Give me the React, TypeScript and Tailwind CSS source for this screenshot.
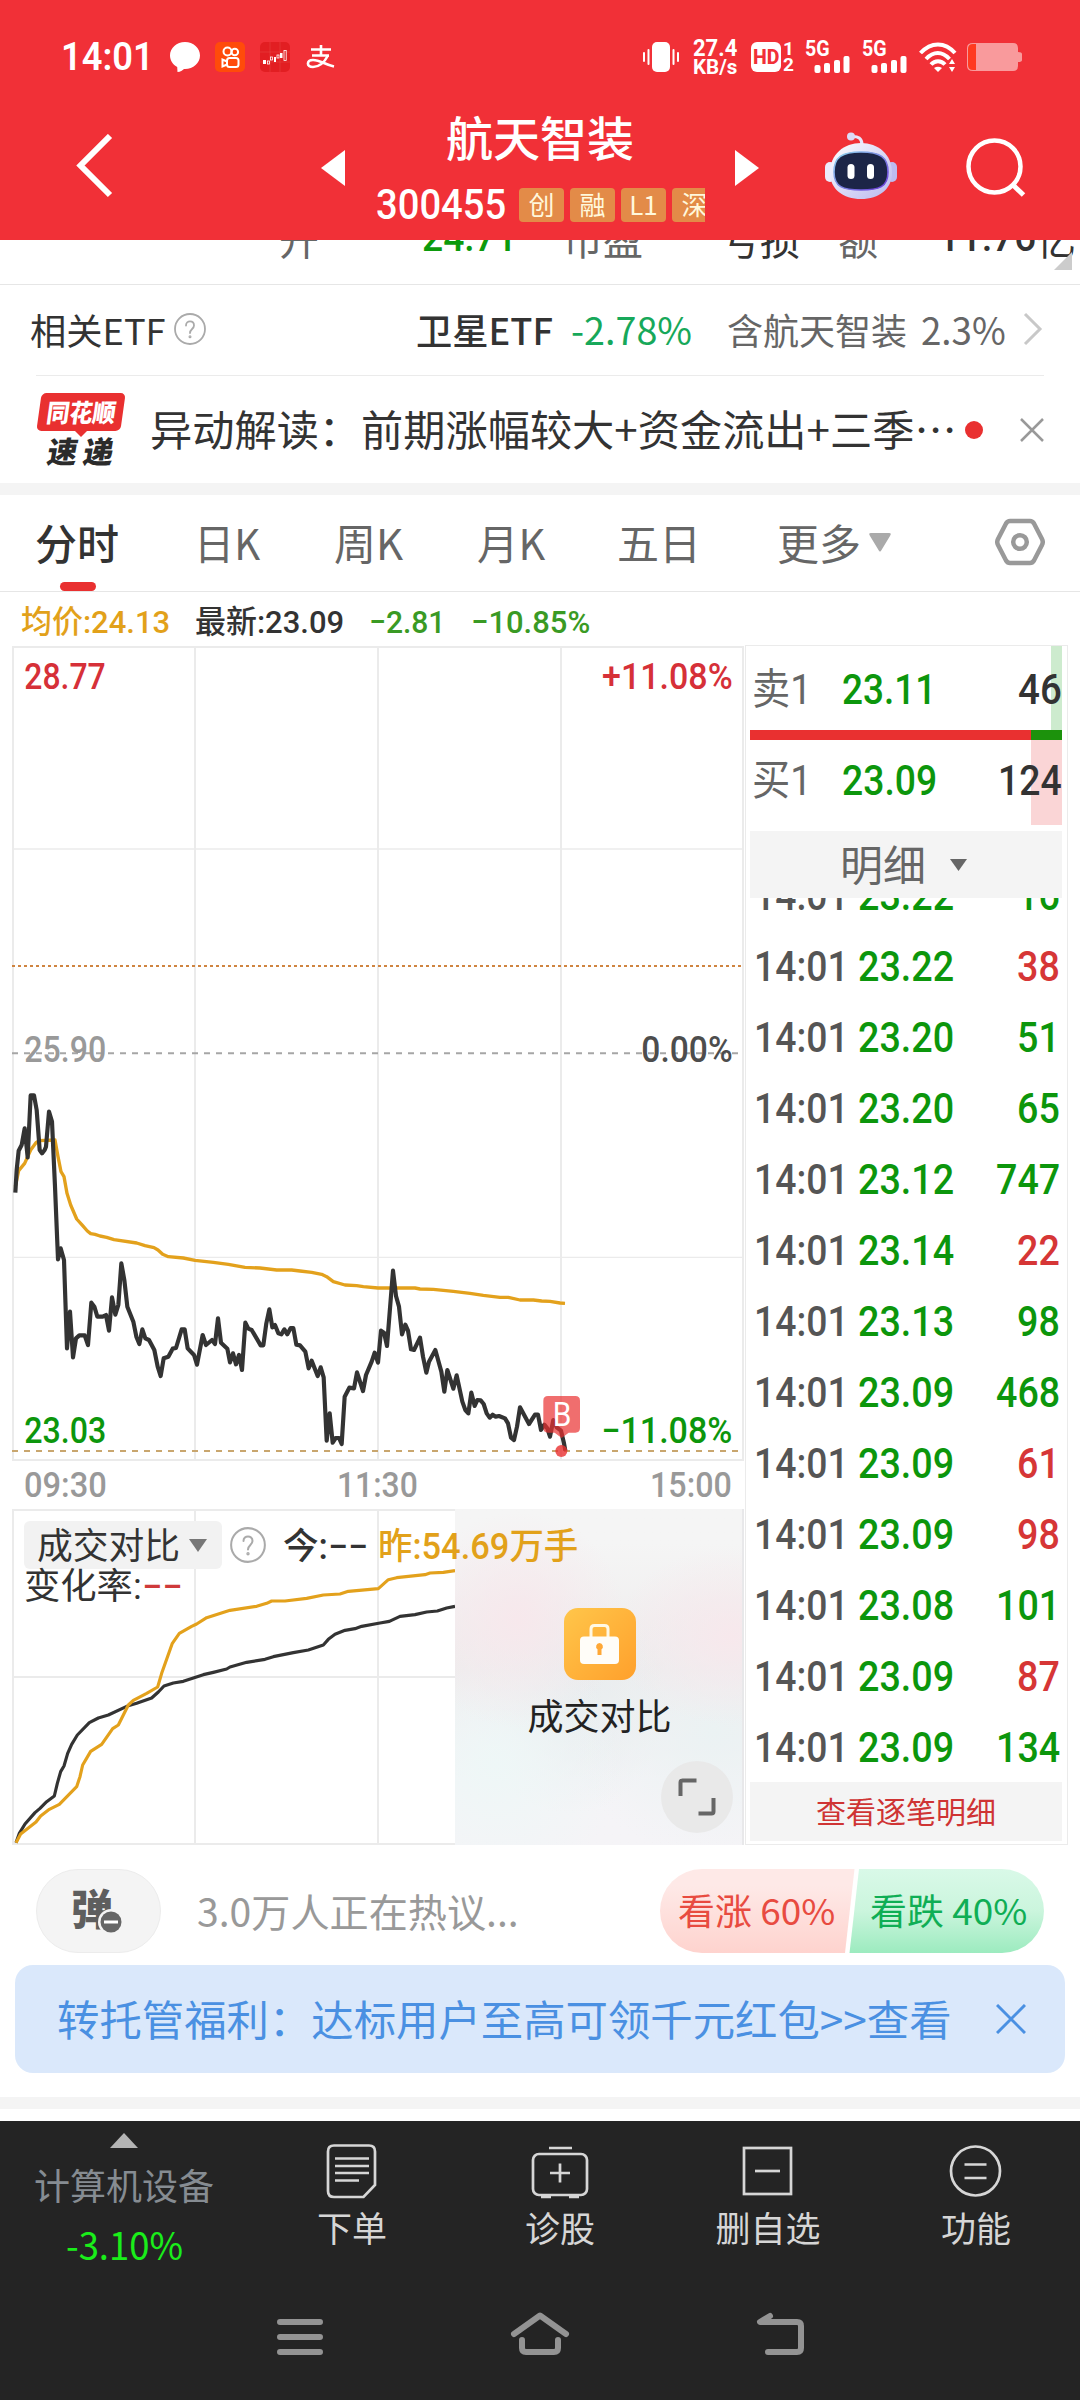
import React, { useLayoutEffect, useRef, useState } from "react";

/** Single line of text squeezed or stretched horizontally to an exact width. */
function Fit({ w, className = "", children }: { w: number; className?: string; children: React.ReactNode }) {
  const ref = useRef<HTMLSpanElement>(null);
  const [scale, setScale] = useState(1);
  useLayoutEffect(() => {
    if (ref.current) setScale(w / ref.current.offsetWidth);
  }, [w]);
  return (
    <span className={`inline-block shrink-0 whitespace-nowrap ${className}`} style={{ width: w }}>
      <span ref={ref} className="inline-block origin-left" style={{ transform: `scaleX(${scale})` }}>
        {children}
      </span>
    </span>
  );
}

function Signal() {
  return (
    <div className="relative h-[32px] w-[45px]">
      <Fit w={25} className="absolute top-0 left-0 font-['Roboto'] text-[22px] leading-[16px] font-bold">5G</Fit>
      <svg className="absolute right-0 bottom-0 h-[17px] w-[36px]" viewBox="0 0 36 17" fill="#fff">
        <rect x="0.5" y="9" width="6" height="8" rx="2" />
        <rect x="10" y="7" width="6" height="10" rx="2" />
        <rect x="20" y="4" width="6" height="13" rx="2" />
        <rect x="29.5" y="0" width="6" height="17" rx="2" />
      </svg>
    </div>
  );
}

function StatusBar() {
  return (
    <div className="flex h-[114px] items-center pl-[61px] text-white">
      <Fit w={93} className="font-['Roboto'] text-[39px] leading-[40px] font-semibold">14:01</Fit>
      <svg className="ml-[16px] h-[32px] w-[30px]" viewBox="0 0 30 32" fill="#fff">
        <path d="M15 1C6.700 1 0 7 0 14.500c0 5 3 9.300 7.200 11.500l.3 5c3 0 5-1.500 6.500-3H15c8.300 0 15-6 15-13.500S23.300 1 15 1z" />
      </svg>
      <svg className="ml-[15px] h-[30px] w-[30px]" viewBox="0 0 30 30" fill="none">
        <rect width="30" height="30" rx="5" fill="#ff4b0a" />
        <g stroke="#fff" strokeWidth="2">
          <circle cx="12.500" cy="9.500" r="4" />
          <circle cx="19.800" cy="10" r="3.300" />
          <rect x="12" y="16" width="11.500" height="9" rx="2.500" />
          <path d="M12 19.500l-4.500-2v7l4.500-2" />
        </g>
      </svg>
      <svg className="ml-[15px] h-[30px] w-[30px]" viewBox="0 0 30 30">
        <rect width="30" height="30" rx="5" fill="#e21e22" />
        <path d="M10 0v30M20 0v30M0 10h30M0 20h30" stroke="#e8403f" strokeWidth="0.6" />
        <g fill="#fff">
          <rect x="3" y="18" width="3" height="4" />
          <rect x="14" y="15" width="2" height="5" />
          <rect x="20" y="11" width="2.500" height="5" />
        </g>
        <g fill="none" stroke="#fff" strokeWidth="0.8">
          <rect x="7.500" y="19" width="2" height="3" />
          <rect x="10.500" y="15" width="2" height="3" />
          <rect x="17" y="13" width="2" height="3" />
          <rect x="24" y="8.500" width="2.200" height="10" />
        </g>
      </svg>
      <svg className="ml-[16px] h-[24px] w-[30px]" viewBox="0 0 30 24" fill="none" stroke="#fff" strokeWidth="2.600">
        <path d="M5 4.500h20M15 0v10M6 10.500h17" />
        <path d="M22 10.500C18 18 13 22 7 22c-7 0-6.500-7 0-7 7 0 12 4.500 21 6.500" />
      </svg>

      <svg className="ml-[307px] h-[32px] w-[36px]" viewBox="0 0 36 32" fill="#fff">
        <rect x="9" y="1" width="18" height="30" rx="5" />
        <path d="M5.500 9v14M1 12v8M30.500 9v14M35 12v8" stroke="#fff" strokeWidth="2" strokeLinecap="round" />
      </svg>
      <div className="ml-[14px] flex flex-col font-['Roboto'] font-bold">
        <Fit w={44} className="text-[24px] leading-[20px]">27.4</Fit>
        <Fit w={44} className="text-[21px] leading-[19px]">KB/s</Fit>
      </div>
      <div className="ml-[14px] flex h-[30px] w-[30px] items-center justify-center rounded-[6px] bg-white font-['Roboto'] text-[#f13037]">
        <Fit w={26} className="text-[21px] leading-[20px] font-extrabold">HD</Fit>
      </div>
      <div className="ml-[2px] flex w-[11px] flex-col items-center font-['Roboto'] text-[19px] leading-[16px] font-bold">
        <span>1</span>
        <span>2</span>
      </div>
      <div className="ml-[11px]"><Signal /></div>
      <div className="ml-[12px]"><Signal /></div>
      <svg className="ml-[12px] h-[32px] w-[38px]" viewBox="0 0 38 32" fill="none" stroke="#fff" strokeWidth="4">
        <path d="M1.500 12C12 0.500 26 0.500 36 12" />
        <path d="M7 18C14.500 10 23 10 30.500 18" />
        <path d="M12 23.500c4-4.500 10-4.500 14 0" />
        <path d="M15 27q4-2.500 8 0l-4 4z" fill="#fff" stroke="none" />
        <path d="M30 23l3-5 3 5zM30 26l3 5 3-5z" fill="#fff" stroke="none" />
      </svg>
      <svg className="ml-[10px] h-[28px] w-[55px]" viewBox="0 0 55 28">
        <path d="M6 0h40q5 0 5 5v4q4 0 4 2v6q0 2-4 2v4q0 5-5 5H6q-6 0-6-5V5q0-5 6-5z" fill="#f99a9c" />
        <path d="M6 1h3v26H6q-5 0-5-5V6q0-5 5-5z" fill="#ff3a20" />
      </svg>
    </div>
  );
}

function Tag({ children }: { children: React.ReactNode }) {
  return (
    <span className="flex h-[34px] w-[45px] shrink-0 items-center justify-center rounded-[4px] bg-[#e38b48] pb-[2px] text-[26px] leading-[30px] text-[#fff8dc]">
      {children}
    </span>
  );
}

function Robot() {
  return (
    <svg className="h-[68px] w-[72px]" viewBox="0 0 72 68">
      <defs>
        <linearGradient id="shell" x1="0" y1="0" x2="1" y2="1">
          <stop offset="0" stopColor="#ffffff" />
          <stop offset="1" stopColor="#b9b8ee" />
        </linearGradient>
        <linearGradient id="rim" x1="0" y1="0" x2="1" y2="1">
          <stop offset="0" stopColor="#8fd8ee" />
          <stop offset="1" stopColor="#6a35d8" />
        </linearGradient>
      </defs>
      <path d="M26 4.500q11-1 11 8" fill="none" stroke="#e8e6fb" strokeWidth="3" />
      <circle cx="26" cy="4.500" r="4" fill="#dcdaf6" />
      <rect x="0" y="30" width="10" height="20" rx="5" fill="#eceafb" />
      <rect x="62" y="30" width="10" height="20" rx="5" fill="#bdbcf0" />
      <path d="M36 11C53 11 67 22 67 41C67 57 54 67 36 67S5 57 5 41C5 22 19 11 36 11z" fill="url(#shell)" />
      <path d="M36 20c19 0 27 5 27 20s-9 18-27 18S9 55 9 40s8-20 27-20z" fill="#1c2547" stroke="url(#rim)" strokeWidth="1.600" />
      <rect x="22.500" y="32" width="7" height="15" rx="3.500" fill="#fff" />
      <rect x="42" y="32" width="7" height="15" rx="3.500" fill="#fff" />
    </svg>
  );
}

function Header() {
  return (
    <header className="h-[240px] bg-[#f13037]">
      <StatusBar />
      <div className="flex h-[126px] items-start text-white">
        <svg className="mt-[20px] ml-[76px] h-[64px] w-[37px]" viewBox="0 0 37 64" fill="none" stroke="#fff" strokeWidth="6">
          <path d="M34 2L4.500 31.500L34 61" />
        </svg>
        <svg className="mt-[36px] ml-[208px] h-[36px] w-[24px]" viewBox="0 0 24 36" fill="#fff"><path d="M24 0v36L0 18z" /></svg>
        <div className="ml-[31px] w-[330px]">
          <div className="ml-[70px] h-[68px] text-[47px] leading-[44px] font-medium">航天智装</div>
          <div className="flex w-[329px] items-center gap-[6px] overflow-hidden">
            <Fit w={130} className="mr-[7px] font-['Roboto'] text-[42px] leading-[46px] font-medium">300455</Fit>
            <Tag>创</Tag>
            <Tag>融</Tag>
            <Tag>L1</Tag>
            <Tag>深</Tag>
          </div>
        </div>
        <svg className="mt-[36px] ml-[29px] h-[36px] w-[24px]" viewBox="0 0 24 36" fill="#fff"><path d="M0 0v36L24 18z" /></svg>
        <div className="mt-[18px] ml-[66px]"><Robot /></div>
        <svg className="mt-[24px] ml-[69px] h-[62px] w-[62px]" viewBox="0 0 62 62" fill="none" stroke="#fff" strokeWidth="4.500">
          <circle cx="28.500" cy="28.500" r="26" />
          <path d="M46.500 46.500l11 10.500" strokeWidth="5" />
        </svg>
      </div>
    </header>
  );
}

/** Bottom edge of the quote table that is scrolled under the header. */
function QuoteTail() {
  return (
    <div className="relative flex h-[45px] items-end overflow-hidden border-b border-[#e6e6e6] pb-[16px] text-[40px] leading-[60px] whitespace-nowrap text-[#666]">
      <span className="ml-[279px]">开</span>
      <Fit w={95} className="ml-[103px] font-['Roboto'] font-medium text-[#0c9a0c]">24.71</Fit>
      <span className="ml-[46px]">市盈</span>
      <span className="ml-[77px] text-[#333]">亏损</span>
      <span className="ml-[38px]">额</span>
      <Fit w={98} className="ml-[60px] font-['Roboto'] font-medium text-[#333]">11.76</Fit>
      <span className="text-[#333]">亿</span>
      <svg className="absolute right-[8px] bottom-[14px] h-[18px] w-[18px]" viewBox="0 0 18 18"><path d="M18 0v18H0z" fill="#ccc" /></svg>
    </div>
  );
}

function Question({ className }: { className: string }) {
  return (
    <svg className={className} viewBox="0 0 32 32" fill="none" stroke="#aaa" strokeWidth="1.800" strokeLinecap="round">
      <circle cx="16" cy="16" r="15" />
      <path d="M12 12.500c0-5.500 8-5.500 8 0 0 3.500-4 3.500-4 7.500" />
      <circle cx="16" cy="23.800" r="0.600" />
    </svg>
  );
}

function EtfRow() {
  return (
    <div className="flex h-[90px] items-center pb-[2px] pl-[30px] text-[36px] leading-[40px] text-[#333]">
      <Fit w={136}>相关ETF</Fit>
      <Question className="ml-[8px] h-[32px] w-[32px]" />
      <Fit w={137} className="ml-[210px] font-medium">卫星ETF</Fit>
      <Fit w={121} className="ml-[18px] text-[38px] text-[#17a85a]">-2.78%</Fit>
      <span className="ml-[35px] text-[#666]">含航天智装</span>
      <Fit w={85} className="ml-[14px] text-[38px] text-[#666]">2.3%</Fit>
      <svg className="ml-[17px] h-[34px] w-[20px]" viewBox="0 0 20 34" fill="none" stroke="#c8c8c8" strokeWidth="3"><path d="M2 2l15 15L2 32" /></svg>
    </div>
  );
}

function NewsRow() {
  return (
    <div className="mx-[36px] flex h-[108px] items-center border-t border-[#ebebeb]">
      <div className="flex w-[89px] flex-col items-center pb-[4px]">
        <div className="flex h-[38px] w-[84px] -skew-x-[8deg] items-center justify-center rounded-[5px] bg-[#e93030] pb-[2px]">
          <Fit w={69} className="text-[25px] leading-[30px] font-black text-white">同花顺</Fit>
        </div>
        <svg className="h-[6px] w-[12px]" viewBox="0 0 12 6" fill="#e93030"><path d="M0 0h12L6 6z" /></svg>
        <Fit w={66} className="-skew-x-[10deg] text-[30px] leading-[26px] font-black text-[#2b2b2b]">{"速\u2009递"}</Fit>
      </div>
      <Fit w={807} className="ml-[25px] pb-[4px] text-[42px] leading-[48px] text-[#333]">异动解读：前期涨幅较大+资金流出+三季⋯</Fit>
      <span className="ml-[8px] h-[18px] w-[18px] rounded-full bg-[#e93030]" />
      <svg className="ml-[37px] h-[24px] w-[24px]" viewBox="0 0 24 24" stroke="#999" strokeWidth="2.500"><path d="M1 1l22 22M23 1L1 23" /></svg>
    </div>
  );
}

function Tabs() {
  return (
    <div className="relative flex h-[97px] items-center border-b border-[#e6e6e6] pb-[2px] text-[42px] leading-[48px] text-[#666]">
      <Fit w={84} className="ml-[35px] font-medium text-[#333]">分时</Fit>
      <Fit w={66} className="ml-[75px]">日K</Fit>
      <Fit w={69} className="ml-[74px]">周K</Fit>
      <Fit w={68} className="ml-[74px]">月K</Fit>
      <Fit w={84} className="ml-[72px]">五日</Fit>
      <Fit w={84} className="ml-[76px]">更多</Fit>
      <svg className="ml-[8px] h-[19px] w-[22px]" viewBox="0 0 22 19" fill="#aaa"><path d="M2 0h18q3 0 1 3l-8.500 14q-1.500 3-3 0L1 3q-2-3 1-3z" /></svg>
      <svg className="ml-[104px] h-[48px] w-[50px]" viewBox="0 0 50 48" fill="none" stroke="#999">
        <path d="M15 3h20q2.500 0 4 2.500l8 15.500q1.500 3 0 6l-8 15.500q-1.500 2.500-4 2.500H15q-2.500 0-4-2.500L3 27q-1.500-3 0-6l8-15.500Q12.500 3 15 3z" strokeWidth="4.500" />
        <circle cx="25" cy="24" r="6.800" strokeWidth="4.500" />
      </svg>
      <span className="absolute bottom-0 left-[60px] h-[9px] w-[36px] rounded-full bg-[#e93030]" />
    </div>
  );
}

function PriceInfo() {
  return (
    <div className="flex h-[54px] items-center pt-[5px] pl-[21px] font-['Roboto','Noto_Sans_CJK_SC',sans-serif] text-[32px] leading-[40px] font-medium">
      <Fit w={149} className="text-[#e2a11a]">均价:24.13</Fit>
      <Fit w={149} className="ml-[25px] text-[#333]">最新:23.09</Fit>
      <Fit w={76} className="ml-[25px] text-[#3a9a24]">−2.81</Fit>
      <Fit w={119} className="ml-[26px] text-[#3a9a24]">−10.85%</Fit>
    </div>
  );
}

const PRICE =
  "46,518 50,450 56,392 65,375 74,325 83,412 92,226 102,226 110,270 119,390 126,400 134,390 138,380 147,275 156,305 165,500 174,718 182,685 192,720 201,985 210,875 219,1012 228,955 238,946 254,946 264,975 274,848 283,860 292,890 308,890 318,885 327,932 336,832 346,884 355,855 364,730 373,780 382,860 400,905 409,950 418,972 427,928 436,955 447,960 463,990 473,1040 482,1068 491,1015 505,1010 518,986 528,984 545,928 554,928 563,985 582,1005 591,1034 608,945 618,975 636,960 645,972 654,895 663,968 682,986 690,1027 699,1000 708,1033 717,1005 726,1050 736,908 745,926 755,930 782,976 790,976 799,910 808,868 817,922 825,915 835,940 844,943 853,928 862,943 872,924 880,924 889,974 900,976 916,995 926,1045 935,1022 953,1068 962,1042 971,1072 980,1262 989,1180 998,1268 1007,1254 1017,1254 1025,1272 1034,1130 1048,1103 1062,1105 1071,1057 1089,1113 1098,1065 1115,1025 1124,998 1134,1028 1143,932 1152,938 1161,978 1179,752 1188,828 1197,860 1206,943 1216,914 1224,932 1233,988 1242,990 1260,953 1269,1010 1279,1058 1287,1025 1306,990 1324,1055 1333,1115 1342,1050 1360,1106 1370,1066 1387,1145 1396,1170 1405,1180 1414,1118 1424,1158 1432,1140 1442,1141 1451,1152 1460,1180 1469,1193 1478,1184 1487,1190 1497,1188 1515,1195 1524,1210 1533,1253 1542,1260 1551,1220 1560,1162 1587,1212 1605,1184 1614,1184 1623,1230 1633,1214 1642,1225 1650,1250 1660,1200 1670,1222 1683,1232 1692,1270 1696,1292";
const AVERAGE =
  "46,500 56,452 74,430 92,390 108,368 118,362 165,360 174,410 183,455 192,470 201,520 212,555 230,597 248,617 262,633 272,641 285,643 300,648 320,652 342,659 410,669 435,677 462,683 474,690 488,703 505,710 550,714 585,721 640,727 685,733 735,742 780,744 830,750 875,750 900,753 935,757 965,763 980,770 1000,785 1035,795 1070,797 1090,800 1134,804 1245,804 1260,807 1300,808 1360,814 1410,820 1450,826 1500,832 1525,832 1560,840 1600,840 1625,843 1650,844 1680,849 1695,850";
const TODAY =
  "48,1088 58,1060 75,1032 105,998 120,985 140,965 163,948 172,910 182,875 192,858 203,820 215,793 232,765 268,728 295,714 325,705 385,677 410,670 455,654 475,636 492,618 520,609 550,604 610,584 640,577 680,567 690,561 740,547 795,538 820,530 880,518 925,510 970,495 985,478 1005,463 1035,451 1065,446 1085,439 1140,429 1168,424 1200,409 1245,404 1280,396 1312,393 1340,384 1365,379";
const YESTERDAY =
  "48,1088 62,1062 108,1026 122,1008 148,988 178,973 230,920 240,890 248,855 272,814 305,793 338,746 355,735 385,675 400,661 440,640 473,621 485,580 517,490 538,460 575,439 590,432 620,413 690,391 770,379 800,370 815,363 855,363 920,355 970,345 1020,342 1045,334 1135,326 1165,299 1190,293 1275,284 1290,279 1330,277 1365,272";

function PriceChart() {
  return (
    <svg className="ml-[12px] block h-[815px] w-[732px]" viewBox="36 -1122 2196 2445" fontFamily="Roboto" fontWeight="500" fontSize="108">
      <g stroke="#ebebeb" strokeWidth="6" fill="none">
        <rect x="39" y="-1119" width="2190" height="2439" />
        <path d="M585-1122V1320M1134-1122V1320M1683-1122V1320" />
        <path d="M36-513H2232M36 712H2232" strokeWidth="4" />
      </g>
      <g strokeWidth="6" fill="none">
        <path d="M36-162H2232" stroke="#cf8440" strokeDasharray="9 9" />
        <path d="M36 100H2216" stroke="#a6a6a6" strokeDasharray="18 18" />
        <path d="M36 1293H2216" stroke="#c9a66e" strokeDasharray="18 18" />
      </g>
      <polyline points={AVERAGE} fill="none" stroke="#e3a11c" strokeWidth="10" strokeLinejoin="round" />
      <polyline points={PRICE} fill="none" stroke="#333" strokeWidth="12.500" strokeLinejoin="round" />
      <g fill="#e93030">
        <path d="M1644 1128h82q14 0 14 14v82q0 14-14 14h-20l-21 16-21-16h-20q-14 0-14-14v-82q0-14 14-14z" fillOpacity="0.7" />
        <circle cx="1684" cy="1293" r="18" fillOpacity="0.8" />
      </g>
      <text x="1658" y="1218" fontSize="98" fontWeight="400" fill="#fff" textLength="56" lengthAdjust="spacingAndGlyphs">B</text>
      <text x="73" y="-992" fill="#d63038" textLength="244" lengthAdjust="spacingAndGlyphs">28.77</text>
      <text x="1806" y="-992" fill="#d63038" textLength="392" lengthAdjust="spacingAndGlyphs">+11.08%</text>
      <text x="73" y="126" fill="#999" textLength="246" lengthAdjust="spacingAndGlyphs">25.90</text>
      <text x="1924" y="126" fill="#4d4d4d" textLength="274" lengthAdjust="spacingAndGlyphs">0.00%</text>
      <text x="73" y="1269" fill="#0c960c" textLength="246" lengthAdjust="spacingAndGlyphs">23.03</text>
      <text x="1804" y="1269" fill="#0c960c" textLength="393" lengthAdjust="spacingAndGlyphs">−11.08%</text>
    </svg>
  );
}

function TimeAxis() {
  return (
    <div className="flex h-[47px] items-center pt-[3px] pl-[24px] font-['Roboto'] text-[35px] leading-[40px] font-medium text-[#999]">
      <Fit w={83}>09:30</Fit>
      <Fit w={81} className="ml-[230px]">11:30</Fit>
      <Fit w={82} className="ml-[232px]">15:00</Fit>
    </div>
  );
}

function VolumeChart() {
  return (
    <div className="relative ml-[12px] h-[337px] w-[732px]">
      <svg className="absolute inset-0 h-[337px] w-[732px]" viewBox="36 84 2196 1011">
        <g stroke="#ebebeb" strokeWidth="6" fill="none">
          <rect x="39" y="90" width="2190" height="1002" />
          <path d="M585 87V1092M1134 87V1092M36 591H2232" />
        </g>
        <polyline points={TODAY} fill="none" stroke="#333" strokeWidth="9.500" strokeLinejoin="round" />
        <polyline points={YESTERDAY} fill="none" stroke="#e3a11c" strokeWidth="9.500" strokeLinejoin="round" />
      </svg>
      <div className="absolute top-[1px] right-0 flex h-[336px] w-[289px] flex-col items-center border-r-2 border-[#e8e8ea] bg-linear-to-b from-[#f5f5f5] from-10% via-[#edebec] via-48% to-[#f5f4f7] to-80%">
        <div className="absolute inset-0 bg-[radial-gradient(ellipse_at_22%_33%,#f7e8ec_0%,transparent_34%),radial-gradient(ellipse_at_96%_38%,#f7e8ec_0%,transparent_30%),radial-gradient(ellipse_at_14%_76%,#eef7f7_0%,transparent_36%),radial-gradient(ellipse_at_90%_66%,#ebf2f3_0%,transparent_40%),radial-gradient(ellipse_at_40%_58%,#e8edef_0%,transparent_40%)]" />
        <svg className="relative mt-[99px] ml-[2px] h-[72px] w-[72px]" viewBox="0 0 72 72">
          <defs>
            <linearGradient id="lock" x1="0" y1="0" x2="1" y2="1">
              <stop offset="0" stopColor="#ffc64a" />
              <stop offset="1" stopColor="#ffa02c" />
            </linearGradient>
          </defs>
          <rect width="72" height="72" rx="14" fill="url(#lock)" />
          <path d="M27 30V21q0-3.500 3.500-3.500h10q3.500 0 3.500 3.500v9" fill="none" stroke="#fff8e4" strokeWidth="3" />
          <rect x="16" y="28.500" width="39" height="27.500" rx="4" fill="#fffdf8" />
          <path d="M35.500 35a3.500 3.500 0 0 1 2 6.300v5.700h-4v-5.700a3.500 3.500 0 0 1 2-6.300z" fill="#ffa836" />
        </svg>
        <span className="relative mt-[13px] ml-[2px] text-[36px] leading-[42px] text-[#222]">成交对比</span>
        <div className="absolute right-[9px] bottom-[12px] flex h-[72px] w-[72px] items-center justify-center rounded-full bg-[#e9e9e9]">
          <svg className="h-[38px] w-[38px]" viewBox="0 0 38 38" fill="none" stroke="#666" strokeWidth="4">
            <path d="M2.500 18V4.500q0-2 2-2H18.500M20.500 35.500H33.500q2 0 2-2V20" />
          </svg>
        </div>
      </div>
      <div className="absolute top-[13px] left-[12px] font-['Roboto','Noto_Sans_CJK_SC',sans-serif] text-[36px] leading-[40px] text-[#333]">
        <div className="flex h-[48px] items-center">
          <div className="flex h-[48px] w-[198px] items-center rounded-[6px] bg-[#f2f2f2] pl-[13px]">
            <Fit w={143} className="pt-[3px]">成交对比</Fit>
            <svg className="ml-[9px] h-[13px] w-[18px]" viewBox="0 0 18 13" fill="#777"><path d="M0 0h18L9 13z" /></svg>
          </div>
          <Question className="ml-[8px] h-[36px] w-[36px]" />
          <Fit w={85} className="ml-[17px] pt-[3px] font-medium">今:−−</Fit>
          <Fit w={200} className="ml-[10px] pt-[3px] font-medium text-[#e2a11a]">昨:54.69万手</Fit>
        </div>
        <div className="flex h-[32px] items-center pt-[4px]">
          <Fit w={118}>变化率:</Fit>
          <Fit w={41} className="font-medium text-[#cf3a3a]">−−</Fit>
        </div>
      </div>
    </div>
  );
}

const TRADES: [string, string, boolean][] = [
  ["23.22", "16", false],
  ["23.22", "38", true],
  ["23.20", "51", false],
  ["23.20", "65", false],
  ["23.12", "747", false],
  ["23.14", "22", true],
  ["23.13", "98", false],
  ["23.09", "468", false],
  ["23.09", "61", true],
  ["23.09", "98", true],
  ["23.08", "101", false],
  ["23.09", "87", true],
  ["23.09", "134", false],
];

function OrderBook() {
  return (
    <aside className="ml-[1px] flex h-[1200px] w-[323px] flex-col border border-[#ebebeb] pr-[5px] pl-[4px] font-['Roboto','Noto_Sans_CJK_SC',sans-serif] text-[42px] leading-[50px] font-medium">
      <div className="relative flex h-[84px] items-center pt-[4px] pl-[2px]">
        <span className="absolute top-0 right-0 h-full w-[11px] bg-[#cdebce]" />
        <Fit w={60} className="font-normal text-[#666]">卖1</Fit>
        <Fit w={94} className="ml-[30px] text-[#0c960c]">23.11</Fit>
        <Fit w={44} className="relative ml-auto text-[#333]">46</Fit>
      </div>
      <div className="flex h-[10px] bg-[#e93030]"><span className="ml-auto w-[31px] bg-[#1c920c]" /></div>
      <div className="relative flex h-[85px] items-center pb-[4px] pl-[2px]">
        <span className="absolute top-0 right-0 h-full w-[31px] bg-[#fad5d6]" />
        <Fit w={60} className="font-normal text-[#666]">买1</Fit>
        <Fit w={95} className="ml-[30px] text-[#0c960c]">23.09</Fit>
        <Fit w={64} className="relative ml-auto text-[#333]">124</Fit>
      </div>
      <div className="mt-[6px] flex h-[67px] items-center bg-[#f4f4f4] pl-[90px] text-[42px] font-normal text-[#666]">
        <Fit w={86} className="pt-[5px]">明细</Fit>
        <svg className="ml-[24px] h-[12px] w-[17px]" viewBox="0 0 17 12" fill="#666"><path d="M0 0h17L8.500 12z" /></svg>
      </div>
      <div className="h-[884px] overflow-hidden">
        <div className="-mt-[38px]">
          {TRADES.map(([price, qty, up], i) => (
            <div key={i} className="flex h-[71px] items-center pr-[2px] pl-[4px]">
              <Fit w={95} className="text-[#555]">14:01</Fit>
              <Fit w={96} className="ml-[9px] text-[#0c960c]">{price}</Fit>
              <Fit w={qty.length * 21.5} className={up ? "ml-auto text-[#d63636]" : "ml-auto text-[#0c960c]"}>{qty}</Fit>
            </div>
          ))}
        </div>
      </div>
      <div className="flex h-[59px] items-center justify-center bg-[#f4f4f4] pt-[2px] text-[30px] leading-[36px] font-normal text-[#cf3434]">
        <Fit w={180}>查看逐笔明细</Fit>
      </div>
    </aside>
  );
}

function Discussion() {
  return (
    <div className="flex h-[84px] items-center pl-[36px]">
      <div className="relative h-[84px] w-[125px] rounded-full border border-[#ececec] bg-[#f4f4f4]">
        <span className="absolute top-[15px] left-[34px] text-[42px] leading-[44px] font-black text-[#5e5e5e]">弹</span>
        <svg className="absolute top-[39px] left-[61px] h-[26px] w-[26px]" viewBox="0 0 26 26">
          <circle cx="13" cy="13" r="13" fill="#f4f4f4" />
          <circle cx="13" cy="13" r="10.500" fill="#666" />
          <rect x="6" y="11.500" width="14" height="3" fill="#fff" />
        </svg>
      </div>
      <Fit w={322} className="ml-[36px] pb-[2px] text-[39px] leading-[48px] text-[#999]">3.0万人正在热议...</Fit>
      <div className="relative ml-[141px] flex h-[84px] w-[384px] items-center pb-[4px] text-[36px] leading-[42px]">
        <svg className="absolute inset-0 h-[84px] w-[384px]" viewBox="0 0 384 84">
          <defs>
            <linearGradient id="up" x1="0" y1="0" x2="0" y2="1"><stop offset="0.2" stopColor="#fee9e7" /><stop offset="1" stopColor="#fed3ce" /></linearGradient>
            <linearGradient id="down" x1="0" y1="0" x2="0" y2="1"><stop offset="0" stopColor="#d9f9e8" /><stop offset="0.5" stopColor="#cbf5dd" /><stop offset="1" stopColor="#9cebbf" /></linearGradient>
          </defs>
          <path d="M42 0H194.500L185 84H42A42 42 0 0 1 42 0z" fill="url(#up)" />
          <path d="M199 0H342A42 42 0 0 1 342 84H189.500z" fill="url(#down)" />
        </svg>
        <Fit w={157} className="relative ml-[18px] text-[#e84b40]">看涨 60%</Fit>
        <Fit w={157} className="relative ml-[35px] text-[#0fae55]">看跌 40%</Fit>
      </div>
    </div>
  );
}

function Banner() {
  return (
    <div className="mx-[15px] mt-[12px] flex h-[108px] items-center rounded-[18px] bg-[#dae8fb] pl-[42px] text-[#4a90e2]">
      <Fit w={895} className="pb-[2px] text-[42px] leading-[48px]">转托管福利：达标用户至高可领千元红包&gt;&gt;查看</Fit>
      <svg className="ml-[44px] h-[30px] w-[30px]" viewBox="0 0 30 30" stroke="#4a90e2" strokeWidth="3"><path d="M1 1l28 28M29 1L1 29" /></svg>
    </div>
  );
}

function NavItem({ label, children }: { label: string; children: React.ReactNode }) {
  return (
    <div className="flex w-[208px] flex-col items-center pt-[22px]">
      <svg className="h-[56px] w-[58px]" viewBox="0 0 58 56" fill="none" stroke="#d6d6d6" strokeWidth="2.700">
        {children}
      </svg>
      <span className="mt-[7px] text-[35px] leading-[42px] text-[#d6d6d6]">{label}</span>
    </div>
  );
}

function BottomNav() {
  return (
    <nav className="flex h-[159px]">
      <div className="flex w-[248px] flex-col items-center pt-[12px]">
        <svg className="h-[15px] w-[28px]" viewBox="0 0 28 15" fill="#b4b4b4"><path d="M0 15h28L14 0z" /></svg>
        <span className="mt-[15px] text-[36px] leading-[42px] text-[#868c92]">计算机设备</span>
        <Fit w={117} className="mt-[18px] text-[38px] leading-[42px] text-[#1aee1a]">-3.10%</Fit>
      </div>
      <NavItem label="下单">
        <path d="M11 2.500h35q6 0 6 6V42L40.500 54H11q-6 0-6-6V8.500q0-6 6-6z" />
        <path d="M12 15.500h34M12 23h34M12 30h34M12 37.500h24" />
      </NavItem>
      <NavItem label="诊股">
        <rect x="2" y="11" width="54" height="41" rx="6" />
        <path d="M18 5h23M29 20.500v19M19 30h20M10 54h10M38 54h10" />
      </NavItem>
      <NavItem label="删自选">
        <rect x="5" y="5" width="47" height="46" />
        <path d="M16 28h25" />
      </NavItem>
      <NavItem label="功能">
        <circle cx="28.500" cy="28" r="24.500" />
        <path d="M17.500 21.500h22M17.500 35h22" />
      </NavItem>
    </nav>
  );
}

function SystemNav() {
  return (
    <div className="flex h-[120px] items-start pt-[29px]">
      <svg className="ml-[277px] h-[50px] w-[46px]" viewBox="0 0 46 50" stroke="#939393" strokeWidth="6" strokeLinecap="round"><path d="M3 13h40M3 28h40M3 43h40" /></svg>
      <svg className="ml-[187px] h-[50px] w-[60px]" viewBox="0 0 60 50" fill="none" stroke="#939393" strokeWidth="6" strokeLinecap="round" strokeLinejoin="round">
        <path d="M4 25L30 6.500L56 25M12 31V39Q12 43 16 43H44Q48 43 48 39V31" />
      </svg>
      <svg className="ml-[186px] h-[50px] w-[50px]" viewBox="0 0 50 50" fill="none" stroke="#939393" strokeWidth="6" strokeLinecap="round" strokeLinejoin="round">
        <path d="M14 7L4 13H41Q45 13 45 17V39Q45 43 41 43H12" />
      </svg>
    </div>
  );
}

export default function App() {
  return (
    <div lang="zh-CN" className="flex h-[2400px] w-[1080px] flex-col overflow-hidden bg-white font-['Noto_Sans_CJK_SC',sans-serif]">
      <Header />
      <QuoteTail />
      <EtfRow />
      <NewsRow />
      <div className="h-[12px] bg-[#f4f4f4]" />
      <Tabs />
      <div className="flex h-[1253px]">
        <div className="w-[744px]">
          <PriceInfo />
          <PriceChart />
          <TimeAxis />
          <VolumeChart />
        </div>
        <div className="pt-[53px]">
          <OrderBook />
        </div>
      </div>
      <div className="mt-[24px]">
        <Discussion />
        <Banner />
      </div>
      <div className="mt-[24px] h-[12px] bg-[#f4f4f4]" />
      <div className="mt-[12px] flex-1 bg-[#242424]">
        <BottomNav />
        <SystemNav />
      </div>
    </div>
  );
}
